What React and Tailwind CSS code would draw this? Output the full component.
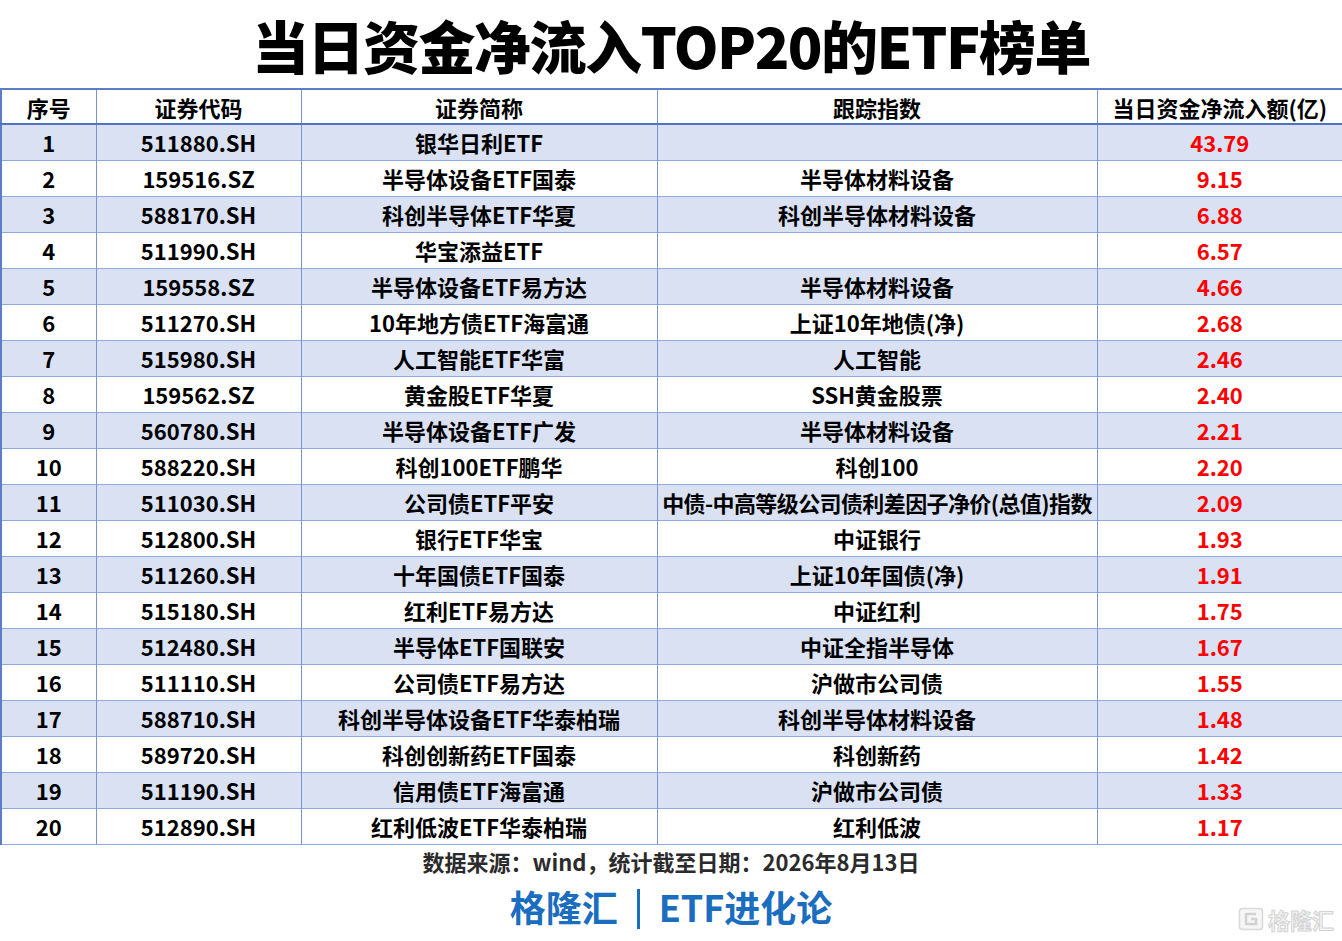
import React from "react";

const rows = [
  ["1", "511880.SH", "银华日利ETF", "", "43.79"],
  ["2", "159516.SZ", "半导体设备ETF国泰", "半导体材料设备", "9.15"],
  ["3", "588170.SH", "科创半导体ETF华夏", "科创半导体材料设备", "6.88"],
  ["4", "511990.SH", "华宝添益ETF", "", "6.57"],
  ["5", "159558.SZ", "半导体设备ETF易方达", "半导体材料设备", "4.66"],
  ["6", "511270.SH", "10年地方债ETF海富通", "上证10年地债(净)", "2.68"],
  ["7", "515980.SH", "人工智能ETF华富", "人工智能", "2.46"],
  ["8", "159562.SZ", "黄金股ETF华夏", "SSH黄金股票", "2.40"],
  ["9", "560780.SH", "半导体设备ETF广发", "半导体材料设备", "2.21"],
  ["10", "588220.SH", "科创100ETF鹏华", "科创100", "2.20"],
  ["11", "511030.SH", "公司债ETF平安", "中债-中高等级公司债利差因子净价(总值)指数", "2.09"],
  ["12", "512800.SH", "银行ETF华宝", "中证银行", "1.93"],
  ["13", "511260.SH", "十年国债ETF国泰", "上证10年国债(净)", "1.91"],
  ["14", "515180.SH", "红利ETF易方达", "中证红利", "1.75"],
  ["15", "512480.SH", "半导体ETF国联安", "中证全指半导体", "1.67"],
  ["16", "511110.SH", "公司债ETF易方达", "沪做市公司债", "1.55"],
  ["17", "588710.SH", "科创半导体设备ETF华泰柏瑞", "科创半导体材料设备", "1.48"],
  ["18", "589720.SH", "科创创新药ETF国泰", "科创新药", "1.42"],
  ["19", "511190.SH", "信用债ETF海富通", "沪做市公司债", "1.33"],
  ["20", "512890.SH", "红利低波ETF华泰柏瑞", "红利低波", "1.17"],
];

const headers = ["序号", "证券代码", "证券简称", "跟踪指数", "当日资金净流入额(亿)"];
const widths = ["w-[95px]", "w-[205px]", "w-[356px]", "w-[440px]", "w-[246px]"];

function Watermark() {
  return (
    <div className="absolute right-[8px] bottom-[10px] flex items-center gap-[4px] opacity-80">
      <svg width="26" height="24" viewBox="0 0 26 24">
        <rect x="1.5" y="1.5" width="23" height="21" rx="3" fill="#f4f4f4" stroke="#d0d0d0" strokeWidth="1.5" />
        <path d="M18 7H8v10h10v-5h-5" fill="none" stroke="#c8c8c8" strokeWidth="2.5" />
      </svg>
      <span className="text-[22px] font-bold leading-none text-[#f2f2f2] [-webkit-text-stroke:1px_#c9c9c9]">
        格隆汇
      </span>
    </div>
  );
}

export default function App() {
  return (
    <div
      className="relative w-[1342px] h-[941px] bg-white overflow-hidden text-black"
      style={{ fontFamily: '"Noto Sans CJK SC", "Noto Sans", sans-serif' }}
    >
      <div className="h-[88px] flex items-center justify-center">
        <h1 className="text-[57px] font-black leading-[64px] tracking-[-1.5px]">
          当日资金净流入TOP20的ETF榜单
        </h1>
      </div>

      <table className="w-[1342px] table-fixed border-collapse border-x-2 border-t-2 border-[#5b7fc6] text-[22px] font-bold">
        <thead>
          <tr className="h-[35px] border-b-2 border-[#4f75c2]">
            {headers.map((h, i) => (
              <th
                key={h}
                className={`${widths[i]} p-0 text-center font-bold leading-none border-l border-[#7896d3] first:border-l-0 whitespace-nowrap`}
              >
                {h}
              </th>
            ))}
          </tr>
        </thead>
        <tbody>
          {rows.map((r, idx) => (
            <tr
              key={r[0]}
              className={`h-[36px] border-b border-[#8ea9db] ${idx % 2 === 0 ? "bg-[#d9e1f2]" : "bg-white"}`}
            >
              {r.map((c, i) => (
                <td
                  key={i}
                  className={`p-0 text-center leading-none whitespace-nowrap overflow-visible border-l border-[#7896d3] first:border-l-0 ${
                    i === 4 ? "text-[#ff0000]" : ""
                  } ${i === 3 && c.length > 16 ? "tracking-[-0.6px]" : ""}`}
                >
                  {c}
                </td>
              ))}
            </tr>
          ))}
        </tbody>
      </table>

      <div className="h-[34px] flex items-center justify-center text-[22px] font-bold text-[#2b2b2b]">
        数据来源：wind，统计截至日期：2026年8月13日
      </div>
      <div className="h-[58px] flex items-center justify-center text-[36px] font-bold text-[#1a6dbf] leading-none -mt-[2px]">
        <span>格隆汇</span>
        <span className="mx-[19px] inline-block w-[3px] h-[40px] bg-[#1a6dbf] translate-y-[3px]"></span>
        <span>ETF进化论</span>
      </div>

      <Watermark />
    </div>
  );
}
